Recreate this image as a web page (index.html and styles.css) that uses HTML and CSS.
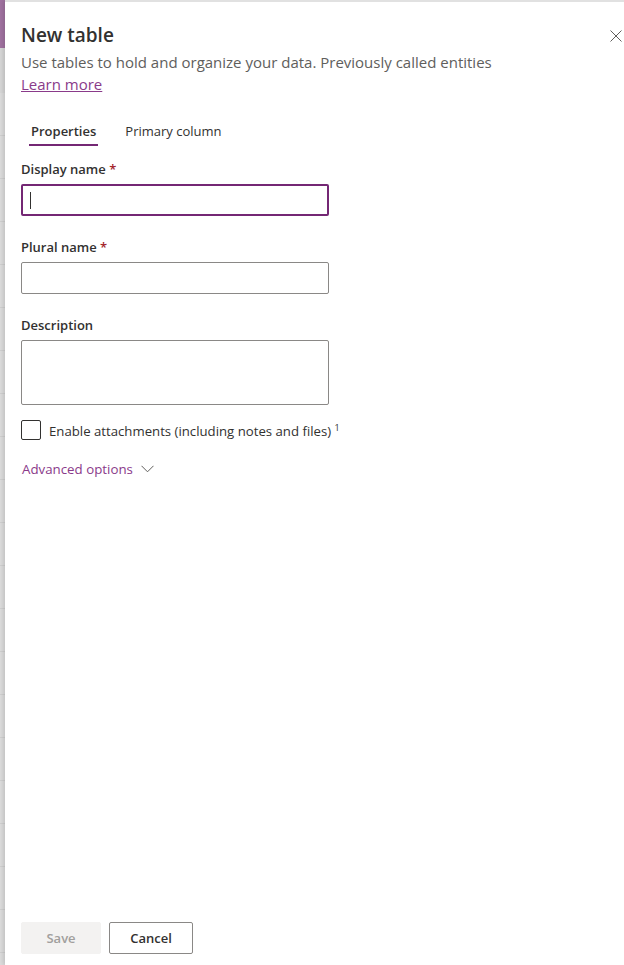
FILE: index.html
```html
<!DOCTYPE html>
<html lang="en">
<head>
<meta charset="UTF-8">
<meta name="viewport" content="width=device-width, initial-scale=1.0">
<title>New table</title>
<link rel="stylesheet" href="styles.css">
</head>
<body>

<div class="backdrop">
    <div class="backdrop-top"></div>
    <div class="backdrop-bar"></div>
    <div class="backdrop-rows"></div>
</div>

<div class="panel">
    <div class="panel-head">
        <h2>New table</h2>
        <button class="close-btn" aria-label="Close">
            <svg width="12" height="12" viewBox="0 0 12 12"><path d="M0.5 0.5 L11.5 11.5 M11.5 0.5 L0.5 11.5" stroke="#605e5c" stroke-width="1" fill="none"/></svg>
        </button>
    </div>
    <p class="subtitle">Use tables to hold and organize your data. Previously called entities</p>
    <a class="learn-more" href="#">Learn more</a>

    <div class="tabs">
        <span class="tab active">Properties</span>
        <span class="tab">Primary column</span>
    </div>

    <form class="table-form">
        <label class="field-label">Display name <span class="req">*</span></label>
        <div class="text-input focused"><span class="caret"></span></div>

        <label class="field-label">Plural name <span class="req">*</span></label>
        <div class="text-input"></div>

        <label class="field-label">Description</label>
        <div class="text-input textarea"></div>

        <div class="check-row">
            <span class="check-box"></span>
            <span class="check-text">Enable attachments (including notes and files) <sup>1</sup></span>
        </div>

        <a class="advanced" href="#">Advanced options
            <svg width="13" height="8" viewBox="0 0 13 8"><path d="M0.5 0.8 L6.5 6.8 L12.5 0.8" stroke="#605e5c" stroke-width="1" fill="none"/></svg>
        </a>
    </form>

    <div class="panel-foot">
        <button class="btn btn-save" disabled>Save</button>
        <button class="btn btn-cancel">Cancel</button>
    </div>
</div>

</body>
</html>
```

FILE: styles.css
```css
body {
    margin: 0;
    height: 965px;
    display: flex;
    font-family: "Segoe UI", "Open Sans", Arial, sans-serif;
    color: #323130;
    background-color: #fff;
    overflow: hidden;
}

.backdrop {
    width: 5px;
    flex-shrink: 0;
    display: flex;
    flex-direction: column;
    background-color: #e4e4e4;
}

.backdrop-top {
    height: 48px;
    background-color: #a072a0;
}

.backdrop-bar {
    height: 45px;
    background-color: #d6d6d6;
}

.backdrop-rows {
    flex: 1;
    background-image: repeating-linear-gradient(to bottom, #dcdcdc 0, #dcdcdc 42px, #cfcfcf 42px, #cfcfcf 43px);
}

.panel {
    flex: 1;
    display: flex;
    flex-direction: column;
    padding: 0 0 11px 16px;
    border-top: 2px solid #e1e1e1;
    box-shadow: -2px 0 4px rgba(0, 0, 0, 0.12);
    min-width: 0;
}

.panel-head {
    display: flex;
    justify-content: space-between;
    align-items: flex-start;
    margin-top: 20px;
}

h2 {
    margin: 0;
    font-size: 19px;
    font-weight: 600;
    line-height: 26px;
    color: #323130;
}

.close-btn {
    background: none;
    border: none;
    padding: 0;
    margin: 8px 2px 0 0;
    width: 12px;
    height: 12px;
    cursor: pointer;
    display: flex;
}

.subtitle {
    margin: 3px 0 0;
    font-size: 15px;
    line-height: 22px;
    color: #605e5c;
}

.learn-more {
    align-self: flex-start;
    font-size: 15px;
    line-height: 22px;
    color: #8a3a8a;
    text-decoration: underline;
}

.tabs {
    display: flex;
    gap: 27px;
    margin-top: 26px;
    padding-left: 10px;
}

.tab {
    font-size: 13px;
    line-height: 20px;
    padding-bottom: 3px;
    color: #323130;
}

.tab.active {
    font-weight: 600;
    border-bottom: 2px solid #742774;
    margin-left: -2px;
    padding: 0 2px 3px;
}

.table-form {
    display: flex;
    flex-direction: column;
    margin-top: 13px;
}

.field-label {
    font-size: 13px;
    font-weight: 600;
    line-height: 20px;
    margin-bottom: 5px;
}

.req {
    color: #a4262c;
}

.text-input {
    width: 308px;
    height: 32px;
    box-sizing: border-box;
    border: 1px solid #8a8886;
    border-radius: 2px;
    margin-bottom: 21px;
    position: relative;
}

.text-input.focused {
    border: 2px solid #742774;
}

.caret {
    position: absolute;
    left: 7px;
    top: 6px;
    width: 1px;
    height: 17px;
    background-color: #323130;
}

.text-input.textarea {
    height: 65px;
    margin-bottom: 13px;
}

.check-row {
    display: flex;
    align-items: center;
    gap: 8px;
}

.check-box {
    width: 20px;
    height: 20px;
    box-sizing: border-box;
    border: 1px solid #323130;
    border-radius: 2px;
}

.check-text {
    font-size: 13.2px;
    line-height: 20px;
}

.check-text sup {
    font-size: 9px;
}

.advanced {
    display: flex;
    align-items: center;
    gap: 8px;
    margin-top: 18px;
    margin-left: 1px;
    font-size: 13.3px;
    line-height: 20px;
    color: #8a3a8a;
    text-decoration: none;
}

.panel-foot {
    margin-top: auto;
    display: flex;
    gap: 8px;
}

.btn {
    height: 32px;
    box-sizing: border-box;
    border-radius: 2px;
    font-family: inherit;
    font-size: 13px;
    font-weight: 600;
    padding: 0 20px;
}

.btn-save {
    width: 80px;
    background-color: #f3f2f1;
    border: 1px solid #f3f2f1;
    color: #a19f9d;
}

.btn-cancel {
    width: 84px;
    background-color: #fff;
    border: 1px solid #8a8886;
    color: #323130;
    cursor: pointer;
}
```
